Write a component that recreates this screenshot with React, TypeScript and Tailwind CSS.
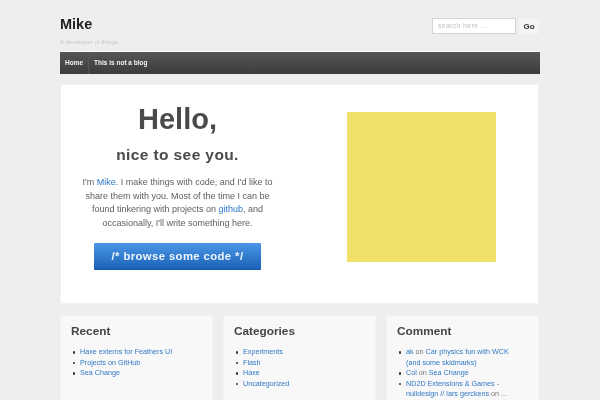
import React from "react";

const link = "text-[#2f78c4]";

function Li({ children }: { children: React.ReactNode }) {
  return (
    <li className="flex">
      <span className="w-[2.5px] h-[2.5px] mt-[4px] ml-[1.5px] mr-[5px] shrink-0 rounded-full bg-[#333]" />
      <span>{children}</span>
    </li>
  );
}

function Widget({ title, children }: { title: string; children: React.ReactNode }) {
  return (
    <div className="w-[153px] h-[100px] shrink-0 bg-[#f8f8f8] border border-[#f2f2f2] pl-[10px] pr-[18px] pt-[6px]">
      <h3 className="text-[11.8px] leading-[18px] font-bold text-[#444]">{title}</h3>
      <ul className="mt-[7px] text-[7.2px] leading-[10.6px] text-[#777]">{children}</ul>
    </div>
  );
}

export default function App() {
  return (
    <div className="w-[600px] h-[400px] overflow-hidden bg-[#eeeeee] blur-[0.3px] font-['Liberation_Sans',sans-serif]">
      <div className="w-[480px] ml-[60px]">
        <header className="h-[51px] flex justify-between">
          <div className="pt-[15px]">
            <h1 className="text-[14.5px] leading-[18px] font-bold text-[#222]">Mike</h1>
            <p className="text-[6.2px] leading-[7px] mt-[5px] text-[#c8c8c8]">A developer of things</p>
          </div>
          <div className="flex items-start pt-[18px] gap-[3px] pr-[1px]">
            <div className="w-[84px] h-[16px] bg-white border border-[#d4d4d4] pl-[5px] text-[7px] leading-[14px] text-[#c0c0c0] tracking-[0.3px]">
              search here ...
            </div>
            <div className="w-[20px] h-[15px] mt-[1px] bg-[#f4f4f4] text-center text-[8px] leading-[15px] font-bold text-[#333]">
              Go
            </div>
          </div>
        </header>
        <nav className="h-[23px] border-t border-white bg-gradient-to-b from-[#565656] to-[#3c3c3c] flex items-center text-[6.5px] font-bold text-[#f4f4f4]">
          <span className="pl-[5px] pr-[5px] leading-[22px] border-r border-[#555]">Home</span>
          <span className="pl-[5px] leading-[22px]">This is not a blog</span>
        </nav>
        <main className="mt-[10px] w-[479px] h-[220px] bg-white border border-[#f2f2f2] flex">
          <div className="w-[233px] shrink-0 flex flex-col items-center pt-[16px]">
            <h2 className="text-[29px] leading-[36px] font-bold text-[#4a4a4a]">Hello,</h2>
            <h3 className="mt-[8px] text-[15.5px] leading-[20px] font-bold text-[#4a4a4a] tracking-[0.4px]">nice to see you.</h3>
            <p className="mt-[11px] w-[200px] text-center text-[9px] leading-[13.6px] text-[#5e5e5e]">
              I'm <span className="text-[#2a77c5]">Mike</span>. I make things with code, and I'd like to share them with you. Most of the time I can be found tinkering with projects on <span className="text-[#2a77c5]">github</span>, and occasionally, I'll write something here.
            </p>
            <div className="mt-[13px] w-[167px] h-[27px] rounded-[1px] bg-gradient-to-b from-[#4b97e6] to-[#1a62b8] border-b border-[#1a5aa5] text-center text-[11.3px] leading-[26px] font-bold text-[#eef5fc] tracking-[0.4px]">
              /* browse some code */
            </div>
          </div>
          <div className="pl-[53px] pt-[27px]">
            <div className="w-[149px] h-[150px] bg-[#f0df69]" />
          </div>
        </main>
        <section className="mt-[11px] flex gap-[10px]">
          <Widget title="Recent">
            <Li><span className={link}>Haxe externs for Feathers UI</span></Li>
            <Li><span className={link}>Projects on GitHub</span></Li>
            <Li><span className={link}>Sea Change</span></Li>
          </Widget>
          <Widget title="Categories">
            <Li><span className={link}>Experiments</span></Li>
            <Li><span className={link}>Flash</span></Li>
            <Li><span className={link}>Haxe</span></Li>
            <Li><span className={link}>Uncategorized</span></Li>
          </Widget>
          <Widget title="Comment">
            <Li><span className={link}>ak</span> on <span className={link}>Car physics fun with WCK (and some skidmarks)</span></Li>
            <Li><span className={link}>Col</span> on <span className={link}>Sea Change</span></Li>
            <Li><span className={link}>ND2D Extensions &amp; Games - nulldesign // lars gerckens</span> on ...</Li>
          </Widget>
        </section>
      </div>
    </div>
  );
}
